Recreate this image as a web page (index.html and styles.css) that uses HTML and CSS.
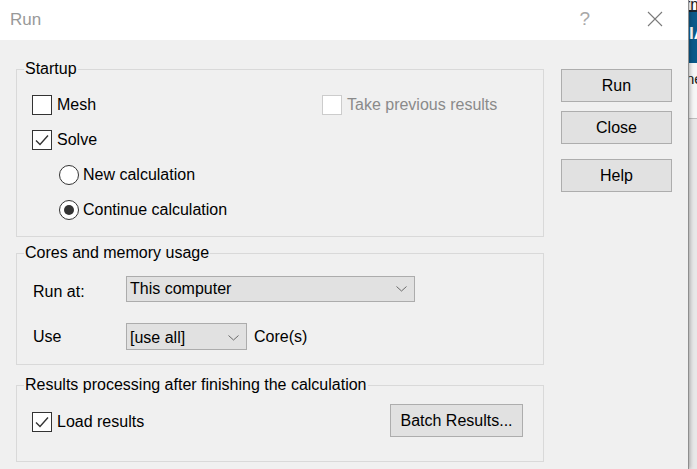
FILE: index.html
```html
<!DOCTYPE html>
<html lang="en">
  <head>
    <meta charset="UTF-8" />
    <title>Run</title>
    <link rel="stylesheet" href="styles.css">
  </head>
  <body>
    <div class="dialog">
      <!-- Title bar -->
      <div class="titlebar">
        <span class="title">Run</span>
        <span class="help-mark">?</span>
        <svg class="close-icon" width="16" height="16" viewBox="0 0 16 16">
          <path d="M1 1 L15 15 M15 1 L1 15" stroke="#7a7a7a" stroke-width="1.1" fill="none" />
        </svg>
      </div>

      <div class="dialog-body">
        <div class="groups">
          <fieldset class="group startup">
            <legend>Startup</legend>
            <div class="row two-col">
              <label class="check-item">
                <span class="checkbox"></span>
                <span>Mesh</span>
              </label>
              <label class="check-item disabled">
                <span class="checkbox"></span>
                <span>Take previous results</span>
              </label>
            </div>
            <div class="row">
              <label class="check-item">
                <span class="checkbox">
                  <svg width="18" height="18" viewBox="0 0 18 18"><path d="M3 9.5 L7 13.5 L15 4.5" stroke="#333" stroke-width="1.4" fill="none" /></svg>
                </span>
                <span>Solve</span>
              </label>
            </div>
            <div class="row indent">
              <label class="radio-item">
                <span class="radio"></span>
                <span>New calculation</span>
              </label>
            </div>
            <div class="row indent">
              <label class="radio-item">
                <span class="radio checked"></span>
                <span>Continue calculation</span>
              </label>
            </div>
          </fieldset>

          <fieldset class="group cores">
            <legend>Cores and memory usage</legend>
            <div class="field-row first">
              <span class="field-label runat">Run at:</span>
              <div class="select wide">
                <span>This computer</span>
                <svg width="11" height="6" viewBox="0 0 11 6"><path d="M0.5 0.5 L5.5 5 L10.5 0.5" stroke="#6a6a6a" stroke-width="1" fill="none" /></svg>
              </div>
            </div>
            <div class="field-row second">
              <span class="field-label">Use</span>
              <div class="select-line">
                <div class="select narrow">
                  <span>[use all]</span>
                  <svg width="11" height="6" viewBox="0 0 11 6"><path d="M0.5 0.5 L5.5 5 L10.5 0.5" stroke="#6a6a6a" stroke-width="1" fill="none" /></svg>
                </div>
                <span class="unit">Core(s)</span>
              </div>
            </div>
          </fieldset>

          <fieldset class="group results">
            <legend>Results processing after finishing the calculation</legend>
            <div class="results-row">
              <label class="check-item">
                <span class="checkbox">
                  <svg width="18" height="18" viewBox="0 0 18 18"><path d="M3 9.5 L7 13.5 L15 4.5" stroke="#333" stroke-width="1.4" fill="none" /></svg>
                </span>
                <span>Load results</span>
              </label>
              <button class="btn batch">Batch Results...</button>
            </div>
          </fieldset>
        </div>

        <div class="actions">
          <button class="btn">Run</button>
          <button class="btn">Close</button>
          <button class="btn help">Help</button>
        </div>
      </div>
    </div>

    <!-- window behind the dialog -->
    <div class="backdrop">
      <div class="bd-top">rm</div>
      <div class="bd-line"></div>
      <div class="bd-banner">IA</div>
      <div class="bd-white">ne</div>
      <div class="bd-rule"></div>
      <div class="bd-rest"></div>
    </div>
  </body>
</html>
```

FILE: styles.css
```css
/* Basic reset */
body,
html {
  margin: 0;
  padding: 0;
}

body {
  display: flex;
  height: 469px;
  overflow: hidden;
  background-color: #e8e8e8;
  font-family: "Liberation Sans", Arial, sans-serif;
  font-size: 16px;
  color: #000;
}

/* The dialog window */
.dialog {
  width: 688px;
  flex-shrink: 0;
  background-color: #f0f0f0;
  border-right: 1px solid #8e8e8e;
  box-shadow: 1px 0 4px rgba(0, 0, 0, 0.3);
  position: relative;
  z-index: 1;
}

.titlebar {
  height: 40px;
  background-color: #fff;
  display: flex;
  align-items: center;
  padding-left: 10px;
}

.title {
  font-size: 17px;
  color: #999;
}

.help-mark {
  margin-left: auto;
  font-size: 19px;
  color: #a8a8a8;
  margin-top: -2px;
}

.close-icon {
  margin-left: 57px;
  margin-right: 25px;
  margin-top: -2px;
}

.dialog-body {
  display: flex;
  gap: 17px;
  padding: 20px 16px 0 16px;
}

.groups {
  width: 528px;
}

/* Group boxes */
.group {
  margin: 0;
  border: 1px solid #d9d9d9;
  padding: 0 0 0 7px;
}

.group legend {
  padding: 0 1px;
  line-height: 18px;
}

.startup {
  padding-top: 9px;
  padding-bottom: 9px;
}

.cores {
  margin-top: 7px;
  padding-top: 14px;
  padding-bottom: 14px;
}

.results {
  margin-top: 11px;
  padding-top: 10px;
  padding-bottom: 24px;
}

.row {
  height: 35px;
  display: flex;
  align-items: center;
  padding-left: 8px;
}

.row.two-col {
  display: grid;
  grid-template-columns: 290px auto;
  align-items: center;
}

.row.indent {
  padding-left: 35px;
}

.check-item,
.radio-item {
  display: flex;
  align-items: center;
}

.checkbox {
  box-sizing: border-box;
  width: 20px;
  height: 20px;
  border: 1px solid #333;
  background-color: #fff;
  margin-right: 5px;
  display: flex;
}

.check-item.disabled {
  color: #8a8a8a;
}

.check-item.disabled .checkbox {
  border-color: #cccccc;
}

.radio {
  box-sizing: border-box;
  width: 20px;
  height: 20px;
  border: 1px solid #333;
  border-radius: 50%;
  background-color: #fff;
  margin-right: 4px;
  display: flex;
  align-items: center;
  justify-content: center;
}

.radio.checked::after {
  content: "";
  width: 10px;
  height: 10px;
  border-radius: 50%;
  background-color: #333;
}

/* Cores and memory rows */
.field-row {
  display: grid;
  grid-template-columns: 93px auto;
  align-items: center;
  padding-left: 9px;
}

.field-row.first {
  height: 26px;
}

.field-row.second {
  height: 27px;
  margin-top: 21px;
}

.field-label.runat {
  padding-top: 6px;
}

.select {
  box-sizing: border-box;
  display: flex;
  align-items: center;
  background-color: #e1e1e1;
  border: 1px solid #acacac;
  padding-left: 3px;
}

.select svg {
  margin-left: auto;
  margin-right: 7px;
}

.select.wide {
  width: 289px;
  height: 26px;
}

.select.narrow {
  width: 121px;
  height: 27px;
  padding-top: 2px;
}

.select-line {
  display: flex;
  align-items: center;
}

.unit {
  margin-left: 7px;
}

/* Results processing */
.results-row {
  height: 33px;
  display: flex;
  align-items: center;
  padding-left: 8px;
}

.results-row .check-item {
  margin-top: 3px;
}

/* Buttons */
.btn {
  box-sizing: border-box;
  height: 33px;
  background-color: #e1e1e1;
  border: 1px solid #adadad;
  font-family: "Liberation Sans", Arial, sans-serif;
  font-size: 16px;
  color: #000;
  padding: 0;
}

.batch {
  width: 133px;
  margin-left: auto;
  margin-right: 20px;
}

.actions {
  width: 111px;
  padding-top: 9px;
  display: flex;
  flex-direction: column;
  gap: 9px;
}

.actions .help {
  margin-top: 6px;
}

/* Window behind the dialog */
.backdrop {
  flex: 1;
  display: flex;
  flex-direction: column;
  overflow: hidden;
  white-space: nowrap;
}

.bd-top {
  height: 10px;
  background-color: #fff;
  font-size: 16px;
  line-height: 10px;
  color: #222;
  text-indent: -4px;
  overflow: hidden;
}

.bd-line {
  height: 2px;
  background-color: #1c2630;
}

.bd-banner {
  height: 51px;
  background-color: #0b5a8a;
  color: #fff;
  font-weight: bold;
  font-size: 17px;
  line-height: 44px;
}

.bd-white {
  height: 55px;
  background-color: #f6f6f6;
  font-size: 15px;
  line-height: 32px;
  color: #222;
  text-indent: -3px;
}

.bd-rule {
  height: 1px;
  background-color: #bdbdbd;
}

.bd-rest {
  flex: 1;
  background-color: #e8e8e8;
}
```
